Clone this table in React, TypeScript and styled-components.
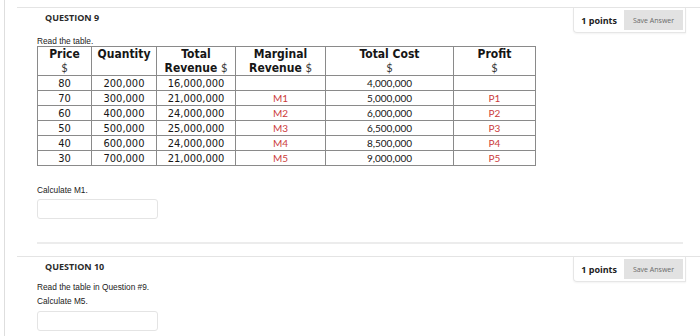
import React from "react";
import styled, { createGlobalStyle, css } from "styled-components";

const Global = createGlobalStyle`
  html, body { margin: 0; padding: 0; background: #ffffff; }
  body { font-family: "Liberation Sans", Arial, sans-serif; }
`;

const tahoma = css`
  font-family: "DejaVu Sans", Verdana, sans-serif;
  font-stretch: condensed;
`;
const calibri = css`
  font-family: Lato, "Open Sans", sans-serif;
`;

const Page = styled.div`
  margin-left: 4px;
  border-left: 1px solid #dedede;
  padding: 7px 0 0 12px;
  min-height: 336px;
  box-sizing: border-box;
`;

const Question = styled.section`
  border-top: 1px solid #e4e4e4;
`;

const Header = styled.div`
  display: flex;
  justify-content: space-between;
  align-items: flex-start;
`;

const Title = styled.h2`
  margin: 0;
  padding: 4px 0 0 28px;
  font-family: "Open Sans", sans-serif;
  font-weight: 700;
  font-size: 9px;
  line-height: 12px;
  color: #2a2a2a;
`;

const PointsBox = styled.div`
  display: flex;
  align-items: center;
  gap: 7px;
  margin-right: 14px;
  padding: 2px 2px 2px 7px;
  border: 1px solid #e6e6e6;
  border-top: none;
  border-radius: 0 0 0 4px;
  box-shadow: 0 1px 2px rgba(0, 0, 0, 0.05);
`;

const Points = styled.span`
  font-family: "Open Sans", sans-serif;
  font-weight: 700;
  font-size: 9px;
  color: #222;
`;

const SaveButton = styled.button`
  width: 59px;
  height: 20px;
  padding: 0;
  border: none;
  background: #e2e2e2;
  font-family: "Open Sans", sans-serif;
  font-size: 7px;
  color: #6a6a6a;
`;

const Body = styled.div<{ $top: number }>`
  padding: 0 17px 0 20px;
  margin-top: ${(p) => p.$top}px;
`;

const Line = styled.p<{ $lh?: number; $mt?: number; $mb?: number }>`
  margin: ${(p) => p.$mt ?? 0}px 0 ${(p) => p.$mb ?? 0}px 0;
  font-family: "Liberation Sans", Arial, sans-serif;
  font-size: 8.3px;
  line-height: ${(p) => p.$lh ?? 10}px;
  color: #222;
`;

const Table = styled.table`
  border-collapse: collapse;
  table-layout: fixed;
  width: 498px;
  border: 1px solid #8a8a8a;
`;

type Face = "t" | "c";

const HeadCell = styled.th<{ $top?: boolean }>`
  ${tahoma}
  height: 28px;
  padding: 0;
  border: 1px solid #8a8a8a;
  font-weight: 700;
  font-size: 12px;
  line-height: 14px;
  color: #161616;
  text-align: center;
  vertical-align: ${(p) => (p.$top ? "top" : "middle")};
`;

const Dollar = styled.span`
  ${calibri}
  font-weight: 400;
  font-size: 11px;
  color: #3a3a3a;
`;

const Row = styled.tr`
  height: 15px;
`;

const Cell = styled.td<{ $face: Face; $red?: boolean }>`
  ${(p) => (p.$face === "t" ? tahoma : calibri)}
  padding: 0;
  border-left: 1px solid #8a8a8a;
  border-right: 1px solid #8a8a8a;
  border-bottom: 1px solid #8a8a8a;
  font-size: ${(p) => (p.$face === "t" ? "11px" : "10px")};
  line-height: 13px;
  color: ${(p) => (p.$red ? "#cc3b3b" : "#161616")};
  text-align: center;
`;

const Input = styled.input<{ $mt: number }>`
  display: block;
  box-sizing: border-box;
  width: 121px;
  height: 20px;
  margin: ${(p) => p.$mt}px 0 0 0;
  border: 1px solid #e4e4e4;
  border-radius: 3px;
  background: #fff;
`;

const Divider = styled.hr`
  margin: 23px 0 12px 0;
  border: none;
  height: 2px;
  background: #ececec;
`;

const rows = [
  { p: "80", q: "200,000", tr: "16,000,000", mr: "", tc: "4,000,000", pr: "" },
  { p: "70", q: "300,000", tr: "21,000,000", mr: "M1", tc: "5,000,000", pr: "P1" },
  { p: "60", q: "400,000", tr: "24,000,000", mr: "M2", tc: "6,000,000", pr: "P2" },
  { p: "50", q: "500,000", tr: "25,000,000", mr: "M3", tc: "6,500,000", pr: "P3" },
  { p: "40", q: "600,000", tr: "24,000,000", mr: "M4", tc: "8,500,000", pr: "P4" },
  { p: "30", q: "700,000", tr: "21,000,000", mr: "M5", tc: "9,000,000", pr: "P5" },
];

const widths = [54, 65, 79, 90, 128, 82];

function PointsArea() {
  return (
    <PointsBox>
      <Points>1 points</Points>
      <SaveButton>Save Answer</SaveButton>
    </PointsBox>
  );
}

export default function App() {
  return (
    <>
      <Global />
      <Page>
        <Question>
          <Header>
            <Title>QUESTION 9</Title>
            <PointsArea />
          </Header>
          <Body $top={4}>
            <Line $lh={9}>Read the table.</Line>
            <Table>
              <colgroup>
                {widths.map((w, i) => (
                  <col key={i} style={{ width: w }} />
                ))}
              </colgroup>
              <thead>
                <tr>
                  <HeadCell>
                    Price
                    <br />
                    <Dollar>$</Dollar>
                  </HeadCell>
                  <HeadCell $top>Quantity</HeadCell>
                  <HeadCell>
                    Total
                    <br />
                    Revenue <Dollar>$</Dollar>
                  </HeadCell>
                  <HeadCell>
                    Marginal
                    <br />
                    Revenue <Dollar>$</Dollar>
                  </HeadCell>
                  <HeadCell>
                    Total Cost
                    <br />
                    <Dollar>$</Dollar>
                  </HeadCell>
                  <HeadCell>
                    Profit
                    <br />
                    <Dollar>$</Dollar>
                  </HeadCell>
                </tr>
              </thead>
              <tbody>
                {rows.map((r) => (
                  <Row key={r.p}>
                    <Cell $face="t">{r.p}</Cell>
                    <Cell $face="t">{r.q}</Cell>
                    <Cell $face="t">{r.tr}</Cell>
                    <Cell $face="c" $red>
                      {r.mr}
                    </Cell>
                    <Cell $face="c">{r.tc}</Cell>
                    <Cell $face="c" $red>
                      {r.pr}
                    </Cell>
                  </Row>
                ))}
              </tbody>
            </Table>
            <Line $mt={19}>Calculate M1.</Line>
            <Input $mt={4} />
            <Divider />
          </Body>
        </Question>
        <Question>
          <Header>
            <Title>QUESTION 10</Title>
            <PointsArea />
          </Header>
          <Body $top={0}>
            <Line $mb={4}>Read the table in Question #9.</Line>
            <Line>Calculate M5.</Line>
            <Input $mt={5} />
          </Body>
        </Question>
      </Page>
    </>
  );
}
